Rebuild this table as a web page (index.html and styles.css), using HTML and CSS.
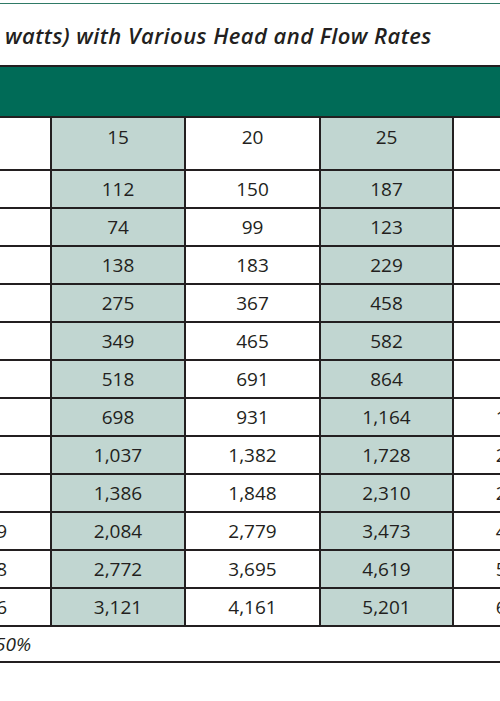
FILE: index.html
```html
<!DOCTYPE html>
<html lang="en">
<head>
<meta charset="utf-8">
<title>Power with Various Head and Flow Rates</title>
<link rel="stylesheet" href="styles.css">
</head>
<body>
<div class="page">
  <div class="rule-top"></div>
  <h1 class="title">watts) with Various Head and Flow Rates</h1>
  <div class="band"></div>
  <table class="grid">
    <colgroup>
      <col class="c0"><col class="c1"><col class="c2"><col class="c3"><col class="c4">
    </colgroup>
    <thead>
      <tr><th></th><th class="sh">15</th><th>20</th><th class="sh">25</th><th></th></tr>
    </thead>
    <tbody>
      <tr><td></td><td class="sh">112</td><td>150</td><td class="sh">187</td><td></td></tr>
      <tr><td></td><td class="sh">74</td><td>99</td><td class="sh">123</td><td></td></tr>
      <tr><td></td><td class="sh">138</td><td>183</td><td class="sh">229</td><td></td></tr>
      <tr><td></td><td class="sh">275</td><td>367</td><td class="sh">458</td><td></td></tr>
      <tr><td></td><td class="sh">349</td><td>465</td><td class="sh">582</td><td></td></tr>
      <tr><td></td><td class="sh">518</td><td>691</td><td class="sh">864</td><td></td></tr>
      <tr><td></td><td class="sh">698</td><td>931</td><td class="sh">1,164</td><td>1,397</td></tr>
      <tr><td></td><td class="sh">1,037</td><td>1,382</td><td class="sh">1,728</td><td>2,074</td></tr>
      <tr><td></td><td class="sh">1,386</td><td>1,848</td><td class="sh">2,310</td><td>2,772</td></tr>
      <tr><td>1,389</td><td class="sh">2,084</td><td>2,779</td><td class="sh">3,473</td><td>4,168</td></tr>
      <tr><td>1,848</td><td class="sh">2,772</td><td>3,695</td><td class="sh">4,619</td><td>5,543</td></tr>
      <tr><td>2,086</td><td class="sh">3,121</td><td>4,161</td><td class="sh">5,201</td><td>6,241</td></tr>
    </tbody>
    <tfoot>
      <tr><td class="note" colspan="5">50%</td></tr>
    </tfoot>
  </table>
</div>
</body>
</html>
```
FILE: styles.css
```css
* { box-sizing: border-box; }
html, body { margin: 0; background: #fff; }
body {
  font-family: "Open Sans", "Noto Sans", sans-serif;
  color: #231f20;
  overflow: hidden;
}
.page { width: 500px; height: 701px; overflow: hidden; }
.rule-top { height: 1px; background: #2f7a66; margin-top: 3px; }
.title {
  height: 61px;
  margin: 0;
  padding-left: 5px;
  display: flex;
  align-items: center;
  font-size: 22px;
  font-style: italic;
  font-weight: 600;
  letter-spacing: 0.45px;
  white-space: nowrap;
}
.band {
  height: 51px;
  border-top: 2px solid #231f20;
  background: #006b57;
}
.grid {
  margin-left: -84px;
  width: 670px;
  table-layout: fixed;
  border-collapse: separate;
  border-spacing: 0;
  font-size: 19px;
  line-height: 26px;
}
.c0 { width: 134px; }
.c1 { width: 134px; }
.c2 { width: 135px; }
.c3 { width: 133px; }
.c4 { width: 134px; }
.grid th, .grid td {
  padding: 0;
  text-align: center;
  border-top: 2px solid #231f20;
  white-space: nowrap;
}
.grid th + th, .grid td + td { border-left: 2px solid #231f20; }
.grid th {
  height: 53px;
  vertical-align: top;
  padding-top: 6px;
  font-weight: 400;
}
.grid tbody td { height: 38px; vertical-align: middle; }
.grid .sh { background: #c1d6d1; }
.grid .note {
  height: 38px;
  text-align: left;
  padding-left: 79px;
  font-style: italic;
  border-bottom: 2px solid #231f20;
}
```
